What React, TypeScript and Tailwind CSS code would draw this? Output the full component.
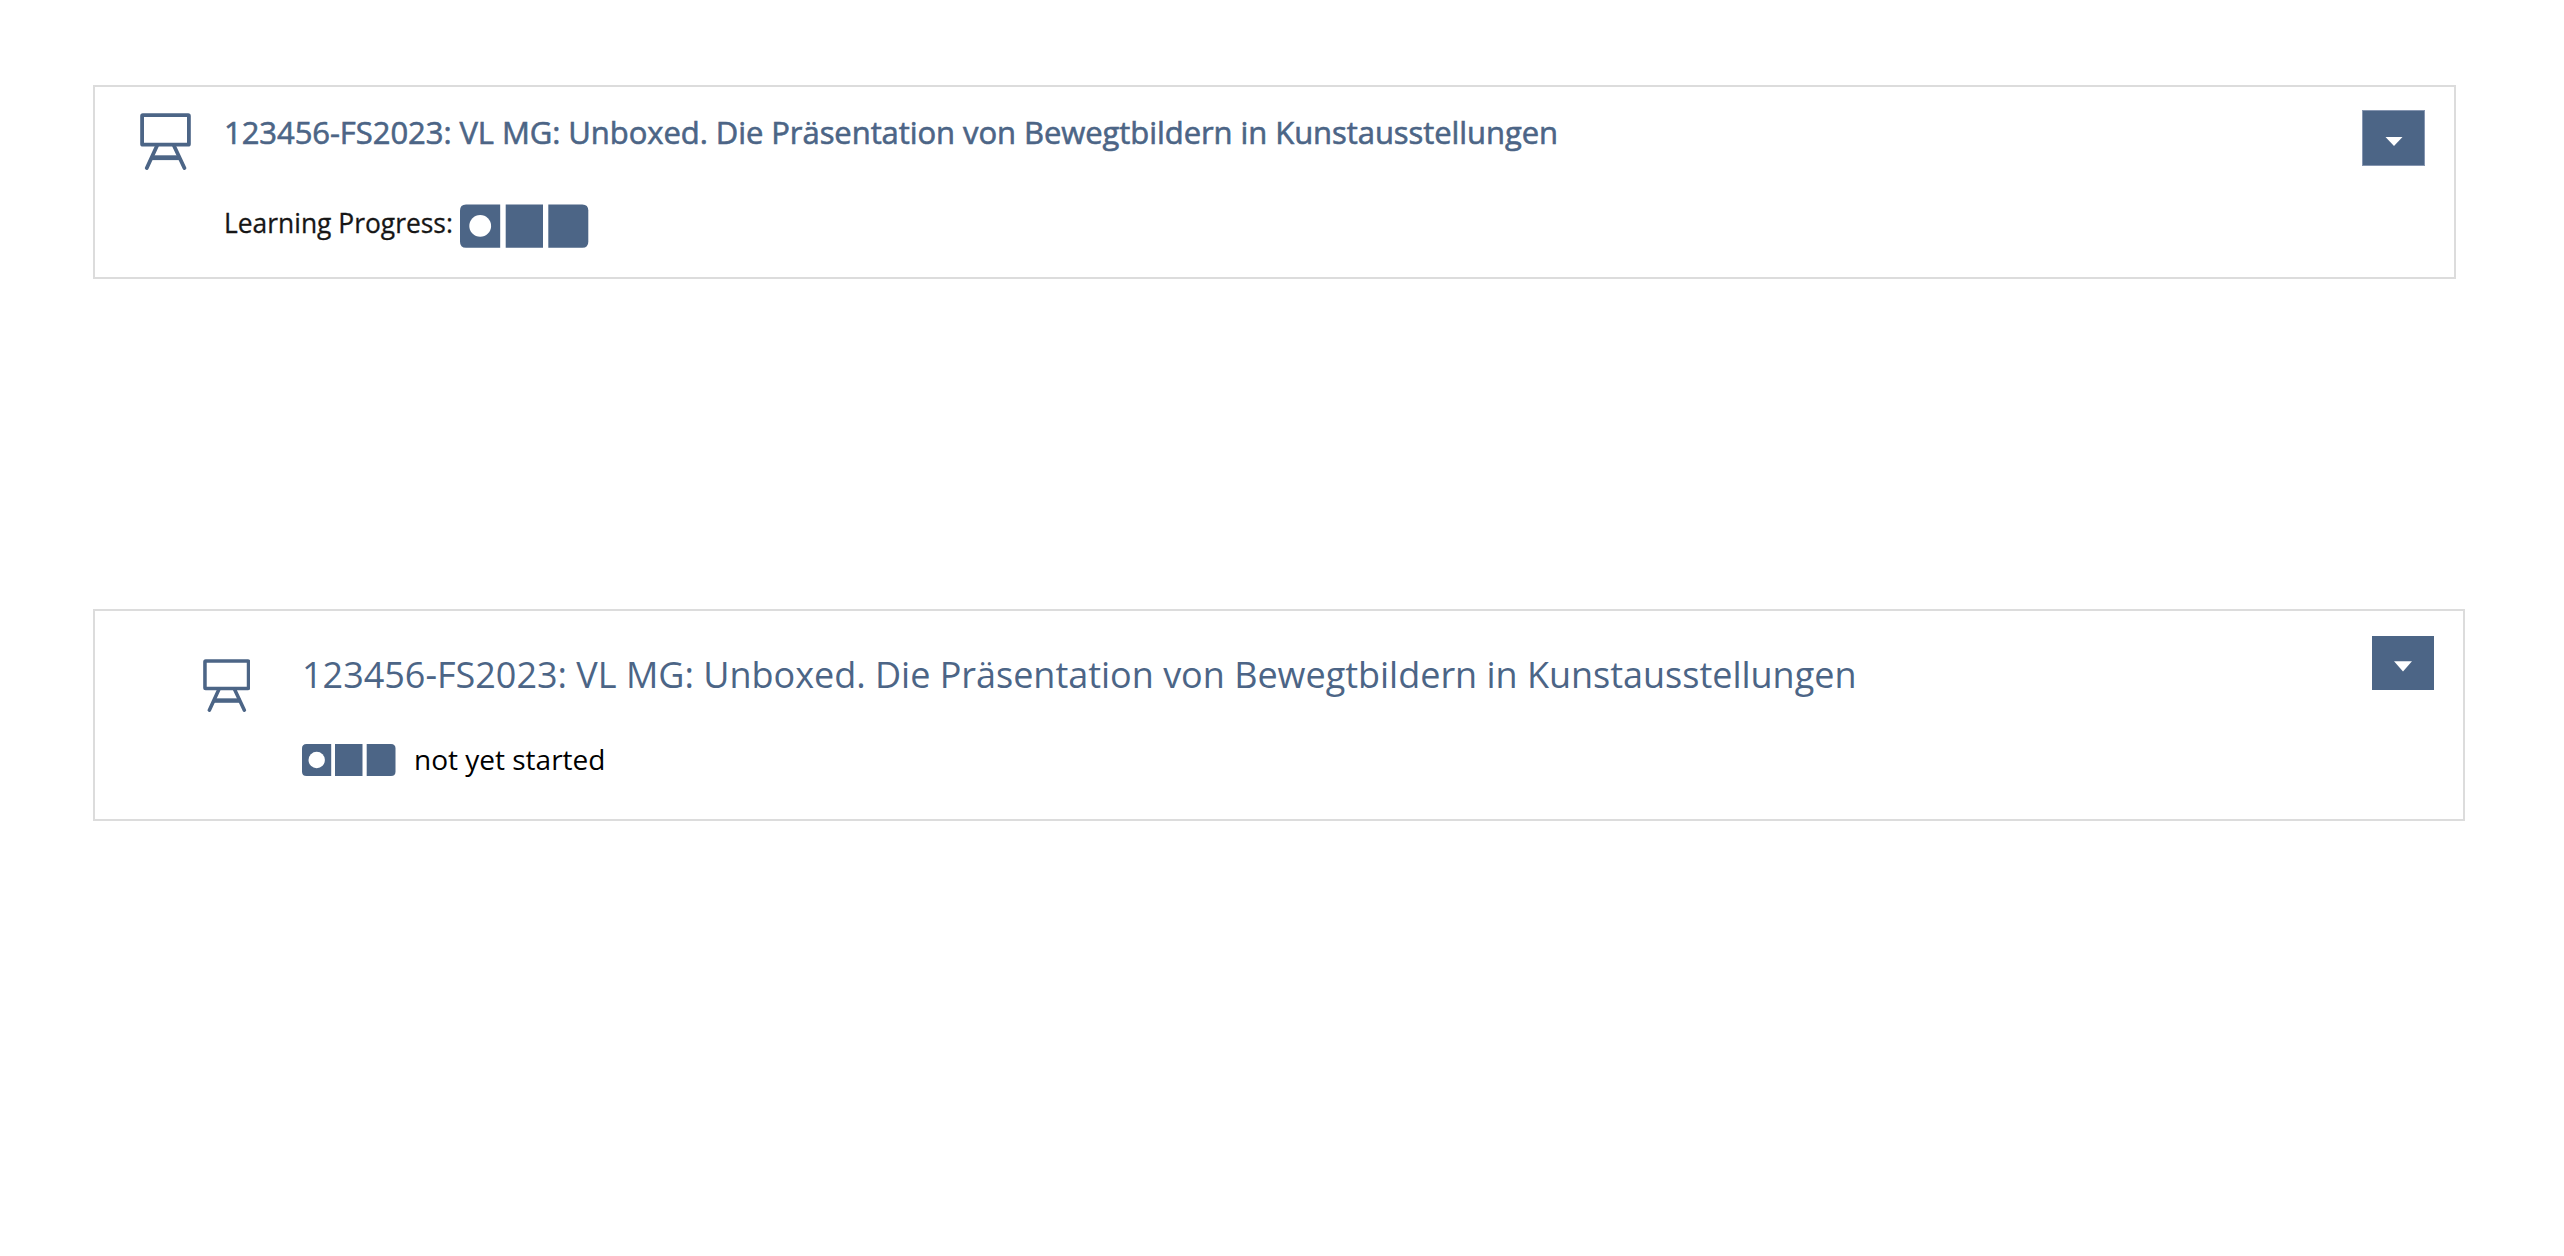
const TITLE =
  '123456-FS2023: VL MG: Unboxed. Die Präsentation von Bewegtbildern in Kunstausstellungen';

function CourseIcon({ className }: { className: string }) {
  return (
    <svg viewBox="0 0 51 57" preserveAspectRatio="none" className={className} fill="none" stroke="#4c6586" aria-hidden="true">
      <rect x="2.1" y="2.1" width="46.8" height="29.6" rx="0.8" strokeWidth="3.8" />
      <path d="M16.9 33 6.8 55M34.1 33 44.4 55" strokeWidth="3.8" strokeLinecap="round" />
      <path d="M11.5 44.7H40" strokeWidth="4.8" />
    </svg>
  );
}

function ProgressSmall() {
  return (
    <svg viewBox="0 0 94 32" className="mt-[4px] h-[32px] w-[94px]" fill="#4c6586" aria-hidden="true">
      <path d="M4.5 0H29.2V32H4.5Q0 32 0 27.5V4.5Q0 0 4.5 0Z" />
      <path d="M33 0H60.5V32H33Z" />
      <path d="M64.7 0H89Q93.5 0 93.5 4.5V27.5Q93.5 32 89 32H64.7Z" />
      <circle cx="14.7" cy="16" r="8.2" fill="#fff" />
    </svg>
  );
}

function ProgressLarge() {
  return (
    <svg viewBox="0 0 129 44" className="mt-px h-[44px] w-[129px]" fill="#4c6586" aria-hidden="true">
      <path d="M6 .5H40.2V43.7H6Q0 43.7 0 37.7V6.5Q0 .5 6 .5Z" />
      <path d="M45.7 .5H83V43.7H45.7Z" />
      <path d="M88.3 .5H122.3Q128.3 .5 128.3 6.5V37.7Q128.3 43.7 122.3 43.7H88.3Z" />
      <circle cx="20.2" cy="21.9" r="10.9" fill="#fff" />
    </svg>
  );
}

export default function App() {
  return (
    <main className="flex h-[1256px] w-[2564px] flex-col items-start bg-white pt-[85px] pl-[93px] font-['Open_Sans',sans-serif]">
      <section className="flex h-[194px] w-[2363px] items-start border-2 border-[#dcdcdc]">
        <CourseIcon className="mt-[26px] ml-[45px] h-[57px] w-[51px] shrink-0" />
        <div className="ml-[33px] grow">
          <h2 className="mt-[22px] h-[46px] whitespace-nowrap text-[31px] leading-[46px] tracking-[-0.065px] text-[#4c6586] [-webkit-text-stroke:0.6px_#4c6586]">
            <a>{TITLE}</a>
          </h2>
          <div className="mt-[48px] flex h-[46px] items-start">
            <span className="w-[236px] whitespace-nowrap text-[26.4px] leading-[40px] text-[#161616] [-webkit-text-stroke:0.3px_#161616]">Learning Progress:</span>
            <ProgressLarge />
          </div>
        </div>
        <button aria-label="Actions" className="mt-[23px] mr-[29px] flex h-[56px] w-[63px] shrink-0 justify-center border border-[#8595b0] bg-[#4c6586]">
          <svg viewBox="0 0 18 10" className="mt-[26px] h-[10px] w-[18px]" fill="#fff"><path d="M.5 0H17.5L9 9Z" /></svg>
        </button>
      </section>

      <section className="mt-[330px] flex h-[212px] w-[2372px] items-start border-2 border-[#dcdcdc]">
        <CourseIcon className="mt-[48px] ml-[107.5px] h-[53px] w-[47.5px] shrink-0" />
        <div className="ml-[52px] grow">
          <h2 className="mt-[37px] h-[54px] whitespace-nowrap text-[36px] leading-[54px] tracking-[-0.015px] text-[#4c6586]">
            <a>{TITLE}</a>
          </h2>
          <div className="mt-[38px] flex h-[40px] items-start">
            <ProgressSmall />
            <span className="ml-[18px] whitespace-nowrap text-[28px] leading-[38px] text-black">not yet started</span>
          </div>
        </div>
        <button aria-label="Actions" className="mt-[25px] mr-[29px] flex h-[54px] w-[62px] shrink-0 justify-center bg-[#4c6586]">
          <svg viewBox="0 0 18 11" className="mt-[25px] h-[11px] w-[18px]" fill="#fff"><path d="M0 .3H18L9 10.6Z" /></svg>
        </button>
      </section>
    </main>
  );
}
